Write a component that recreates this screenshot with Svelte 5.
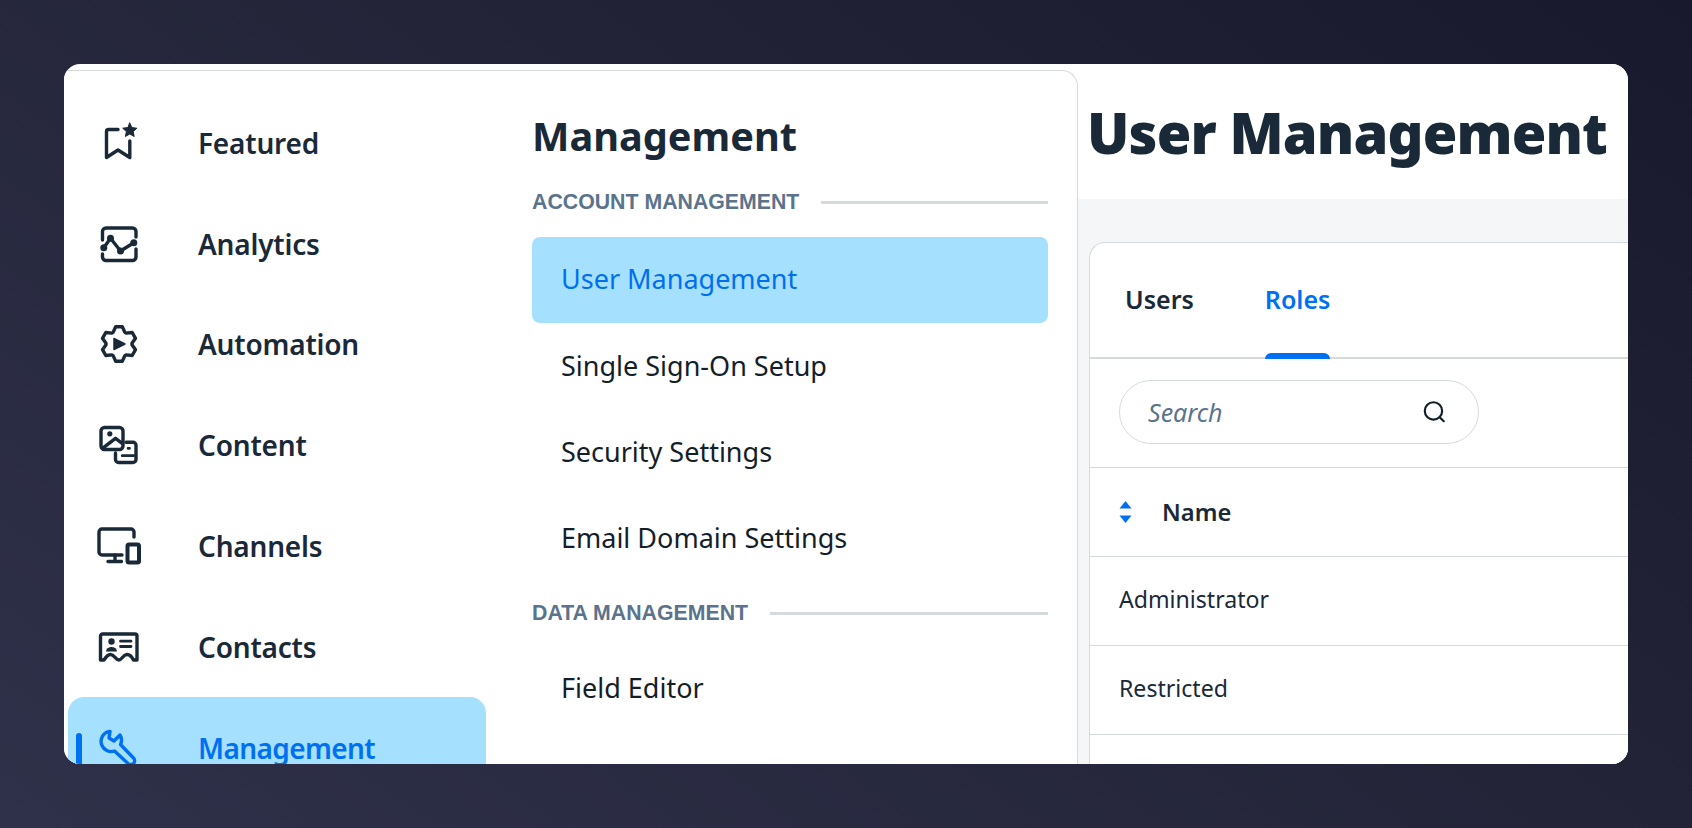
<script lang="ts">
	// left rail entries, icon is picked by id in the markup
	const navItems = [
		{ id: 'featured', label: 'Featured' },
		{ id: 'analytics', label: 'Analytics' },
		{ id: 'automation', label: 'Automation' },
		{ id: 'content', label: 'Content' },
		{ id: 'channels', label: 'Channels' },
		{ id: 'contacts', label: 'Contacts' },
		{ id: 'management', label: 'Management', active: true }
	];

	const accountLinks = ['User Management', 'Single Sign-On Setup', 'Security Settings', 'Email Domain Settings'];
	const roles = ['Administrator', 'Restricted', ''];

	// six toothed gear outline around (22,22)
	function gearPoints() {
		const pts = [];
		for (let i = 0; i < 6; i++) {
			const a = -90 + i * 60;
			for (const [off, r] of [[-27, 13], [-11, 17.5], [11, 17.5], [27, 13]]) {
				const t = ((a + off) * Math.PI) / 180;
				pts.push(`${(22 + r * Math.cos(t)).toFixed(1)},${(22 + r * Math.sin(t)).toFixed(1)}`);
			}
		}
		return pts.join(' ');
	}
</script>

<div class="stage">
	<div class="window">
		<aside class="flyout">
			<nav class="rail">
				{#each navItems as item (item.id)}
					<div class="rail-item" class:active={item.active}>
						{#if item.active}<span class="marker"></span>{/if}
						<svg class="rail-icon" viewBox="0 0 44 44" fill="none" stroke="currentColor" stroke-width="3.4" stroke-linecap="round" stroke-linejoin="round">
							{#if item.id === 'featured'}
								<path d="M21 8.5H11.5a2 2 0 0 0-2 2V36.5L21 29l11.8 7.5V20" />
								<path d="M32.8 2l2.1 4.6 5 .6-3.700 3.400 1 4.900-4.400-2.500-4.400 2.500 1-4.900-3.700-3.400 5-.6z" fill="currentColor" stroke-width="1" />
							{:else if item.id === 'analytics'}
								<path d="M5.5 18V9.5A3.5 3.5 0 0 1 9 6h26.5A3.5 3.5 0 0 1 39 9.5V15" />
								<path d="M5.5 32v3A3.5 3.5 0 0 0 9 38.5h26.5A3.5 3.500 0 0 0 39 35v-8" />
								<path d="M6.8 25.7l6.7-9.400 10 12.700 13.300-8.300" />
								<g fill="currentColor" stroke="none">
									<circle cx="6.8" cy="25.7" r="3.5" />
									<circle cx="13.5" cy="16.3" r="3.5" />
									<circle cx="23.5" cy="29" r="3.5" />
									<circle cx="36.8" cy="20.7" r="3.5" />
								</g>
							{:else if item.id === 'automation'}
								<polygon points={gearPoints()} />
								<path d="M17 16.5l11 5.5-11 5.500z" fill="currentColor" stroke-width="1.5" />
							{:else if item.id === 'content'}
								<rect x="4" y="4.5" width="22" height="22" rx="3.5" />
								<circle cx="12.8" cy="10.8" r="2.6" fill="currentColor" stroke="none" />
								<path d="M6.8 24.3l11.700-9 6.700 5" />
								<path d="M29 19.2h7a3 3 0 0 1 3 3v14.300a3 3 0 0 1-3 3H21.500a3 3 0 0 1-3-3V30" />
								<path d="M31 25.3h1.500M25.200 32.700h11.600" stroke-width="2.8" />
							{:else if item.id === 'channels'}
								<path d="M37 13V8a3 3 0 0 0-3-3H5a3 3 0 0 0-3 3v20a3 3 0 0 0 3 3h20" />
								<path d="M18 31v6.5M11 37.5h13.5" />
								<rect x="30.5" y="20.5" width="11.5" height="18" rx="1.5" stroke-width="4" />
							{:else if item.id === 'contacts'}
								<path d="M3.5 35V11a2 2 0 0 1 2-2H38a2 2 0 0 1 2 2v24h-3.500c-2.500-5-4.500-5.500-6.500-5.500-4 0-5 5.500-8.200 5.500-3.300 0-4.300-5.500-8.300-5.500-2.500 0-4 1.500-6.500 5.500z" />
								<circle cx="14.5" cy="16.5" r="3.2" fill="currentColor" stroke="none" />
								<path d="M9 26.5a5.500 4.500 0 0 1 11 0z" fill="currentColor" stroke="none" />
								<path d="M23.5 16.2h10.500M23.500 21.500h10.500" stroke-width="2.8" />
							{:else}
								<path d="M13 5.400A10 10 0 0 0 5 19.500a10 10 0 0 0 12.500 5.500L31 37.500a3.800 3.800 0 0 0 5.500-5.500L23.500 18.500A10 10 0 0 0 23 9l-6 6-5-3z" />
							{/if}
						</svg>
						<span class="rail-label">{item.label}</span>
					</div>
				{/each}
			</nav>

			<div class="links">
				<h2>Management</h2>
				<div class="group-label account">
					<span>ACCOUNT MANAGEMENT</span>
				</div>
				{#each accountLinks as link, i (link)}
					<div class="link" class:current={i === 0}>{link}</div>
				{/each}
				<div class="group-label data">
					<span>DATA MANAGEMENT</span>
				</div>
				<div class="link">Field Editor</div>
			</div>
		</aside>

		<main class="page">
			<header class="page-head">
				<h1>User Management</h1>
			</header>
			<div class="page-body">
				<section class="card">
					<div class="tabs">
						<span class="tab">Users</span>
						<span class="tab selected">Roles</span>
					</div>
					<div class="search-row">
						<div class="search">
							<span>Search</span>
							<svg viewBox="0 0 24 24" width="26" height="26" fill="none" stroke="#131e29" stroke-width="2" stroke-linecap="round">
								<circle cx="11.5" cy="11" r="8" />
								<path d="M17.5 17l3.500 3.500" />
							</svg>
						</div>
					</div>
					<div class="row head">
						<svg class="sort" viewBox="0 0 13 23" width="13" height="24" fill="#0070f2">
							<path d="M6.5 .5l6 7.500H.5z" />
							<path d="M.5 15h12l-6 7.500z" />
						</svg>
						<span>Name</span>
					</div>
					{#each roles as role, i (i)}
						<div class="row">{role}</div>
					{/each}
				</section>
			</div>
		</main>
	</div>
</div>

<style>
	:global(body) {
		margin: 0;
	}
	.stage {
		height: 828px;
		box-sizing: border-box;
		padding: 64px;
		background: linear-gradient(215deg, #19192e 0%, #232438 45%, #2f314a 100%);
		font-family: 'Noto Sans', sans-serif;
		color: #1a2937;
	}
	.window {
		height: 100%;
		display: flex;
		overflow: hidden;
		border-radius: 16px;
		background: #fff;
	}
	.flyout {
		flex: 0 0 1014px;
		box-sizing: border-box;
		margin-top: 6px;
		display: flex;
		background: #fff;
		border-top: 1px solid #d5dadd;
		border-right: 1px solid #d5dadd;
		border-top-right-radius: 16px;
	}
	.rail {
		flex: 0 0 468px;
		box-sizing: border-box;
		padding: 21.5px 46px 0 4px;
	}
	.rail-item {
		position: relative;
		height: 100.8px;
		display: flex;
		align-items: center;
		padding-left: 28.5px;
		gap: 57.5px;
		border-radius: 16px;
		font-size: 28px;
		font-weight: 600;
		letter-spacing: -0.2px;
	}
	.rail-item.active {
		background: #a6e0ff;
		color: #0070f2;
		letter-spacing: -0.6px;
	}
	.marker {
		position: absolute;
		left: 7.5px;
		top: 36px;
		width: 6.5px;
		height: 34px;
		border-radius: 4px;
		background: #0070f2;
	}
	.rail-icon {
		width: 44px;
		height: 44px;
		flex: none;
		overflow: visible;
	}
	.rail-label {
		white-space: nowrap;
	}
	.links {
		flex: 1;
		padding: 40px 29px 0 0;
	}
	h2 {
		margin: 0;
		font-size: 39.7px;
		line-height: 50px;
		font-weight: 700;
		color: #1a2937;
	}
	.group-label {
		display: flex;
		align-items: center;
		gap: 22px;
		height: 30px;
		font-family: 'Liberation Sans', Arial, sans-serif;
		font-size: 21.3px;
		font-weight: 700;
		color: #5b738b;
	}
	.group-label::after {
		content: '';
		flex: 1;
		height: 3px;
		background: #d5dadd;
	}
	.group-label.account {
		margin: 26px 0 20px;
	}
	.group-label.data {
		margin: 17px 0;
	}
	.link {
		height: 86px;
		box-sizing: border-box;
		display: flex;
		align-items: center;
		padding: 0 0 1px 29px;
		border-radius: 8px;
		font-size: 27px;
		color: #131e29;
	}
	.link.current {
		padding-bottom: 3px;
		background: #a6e0ff;
		color: #0070f2;
	}
	.page {
		flex: 1;
		min-width: 0;
		display: flex;
		flex-direction: column;
	}
	.page-head {
		height: 135px;
		flex: none;
		display: flex;
		align-items: center;
		padding-left: 9px;
		background: #fff;
	}
	h1 {
		margin: 0;
		font-size: 56px;
		font-weight: 900;
		letter-spacing: -0.85px;
		white-space: nowrap;
		color: #1a2937;
	}
	.page-body {
		flex: 1;
		padding: 43px 0 0 11px;
		background: #f5f6f7;
	}
	.card {
		height: 100%;
		background: #fff;
		border: 1px solid #d5dadd;
		border-right: 0;
		border-top-left-radius: 16px;
	}
	.tabs {
		height: 116px;
		display: flex;
		gap: 71px;
		padding-left: 35px;
		border-bottom: 2px solid #d5dadd;
		box-sizing: border-box;
	}
	.tab {
		position: relative;
		padding-top: 39px;
		font-size: 25px;
		font-weight: 600;
	}
	.tab.selected {
		color: #0070f2;
	}
	.tab.selected::after {
		content: '';
		position: absolute;
		left: 0;
		right: 0;
		bottom: -2px;
		height: 6px;
		border-radius: 6px 6px 0 0;
		background: #0070f2;
	}
	.search-row {
		height: 108px;
		display: flex;
		align-items: center;
		padding: 0 0 2px 29px;
		box-sizing: border-box;
	}
	.search {
		width: 360px;
		height: 64px;
		box-sizing: border-box;
		display: flex;
		align-items: center;
		justify-content: space-between;
		padding: 0 31px 0 28px;
		border: 1px solid #d5dadd;
		border-radius: 32px;
		font-size: 25px;
		font-style: italic;
		color: #5b738b;
	}
	.row {
		height: 89px;
		box-sizing: border-box;
		display: flex;
		align-items: center;
		padding: 0 0 5px 29px;
		border-top: 1px solid #d5dadd;
		font-size: 23.1px;
		color: #1a2937;
	}
	.row.head {
		gap: 30px;
		padding-bottom: 1px;
		font-size: 23.7px;
		font-weight: 600;
	}
	.sort {
		flex: none;
	}
</style>
